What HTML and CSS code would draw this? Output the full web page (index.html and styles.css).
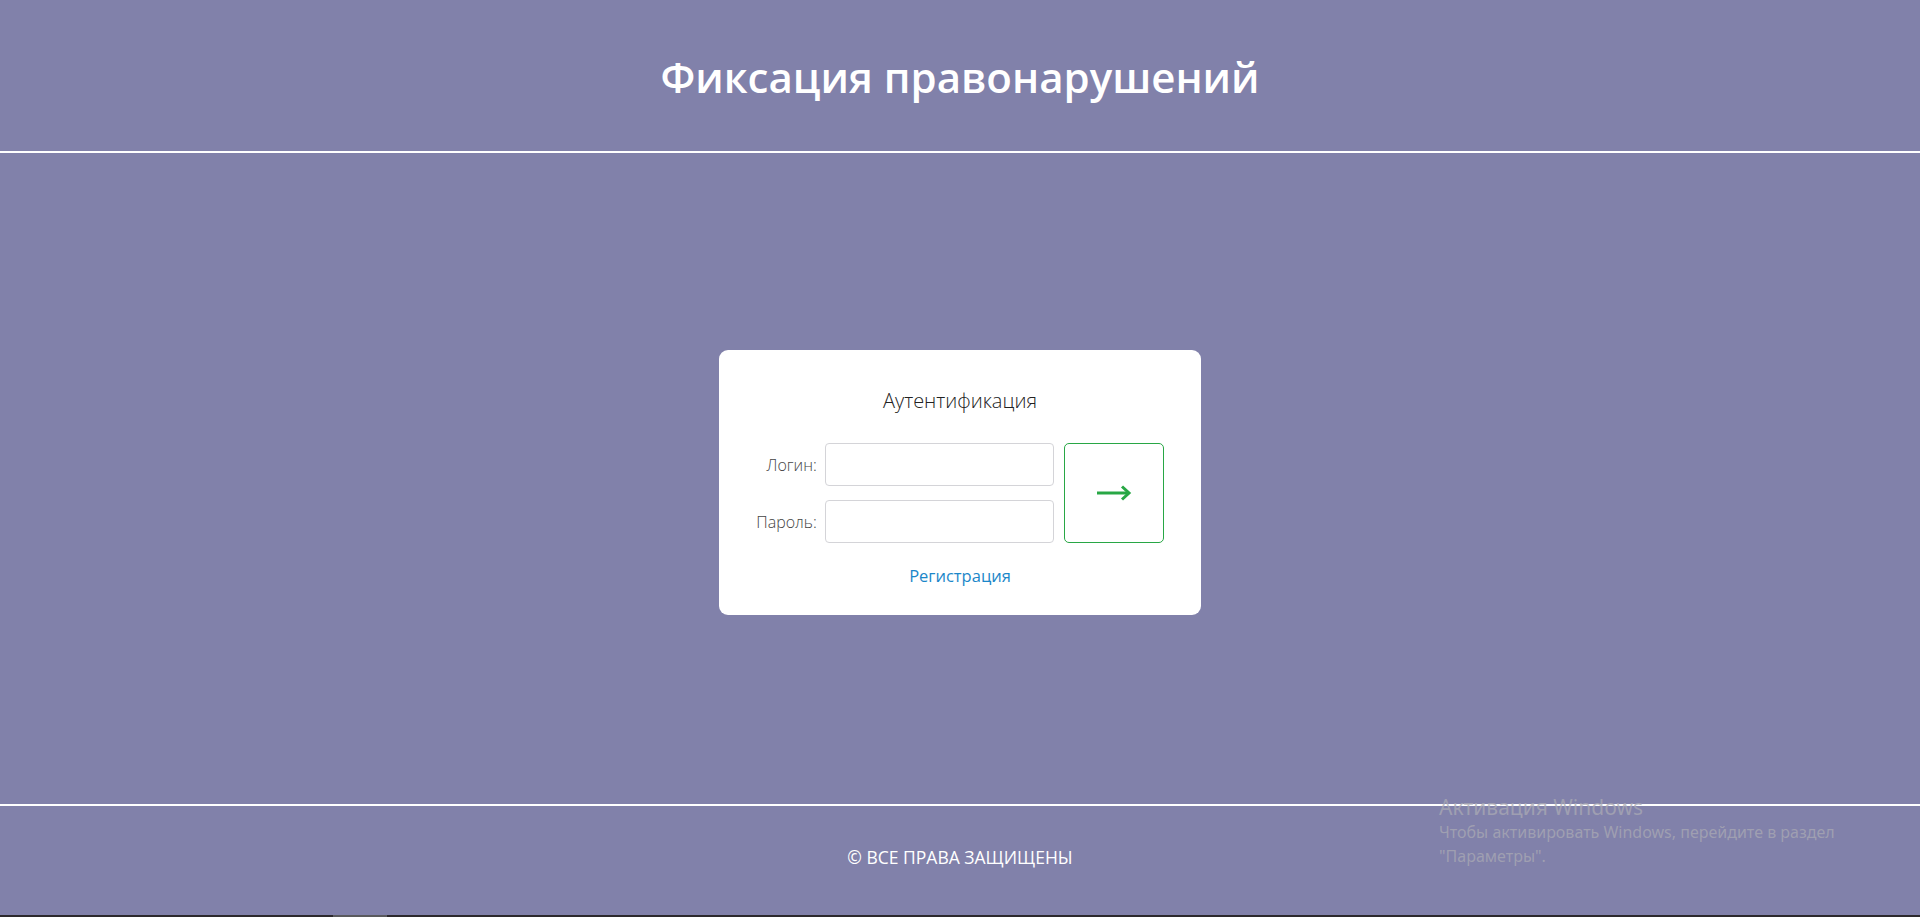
FILE: index.html
```html
<!DOCTYPE html>
<html lang="ru">
<head>
<meta charset="utf-8">
<title>Фиксация правонарушений</title>
<link rel="stylesheet" href="styles.css">
</head>
<body>
<div class="page">
  <header class="header">
    <h1 class="title">Фиксация правонарушений</h1>
  </header>
  <main class="main">
    <form class="card" onsubmit="return false;">
      <div class="card-title">Аутентификация</div>
      <div class="form-row">
        <div class="fields">
          <label class="label" for="login">Логин:</label>
          <input class="input" id="login" type="text">
          <label class="label" for="password">Пароль:</label>
          <input class="input" id="password" type="password">
        </div>
        <button class="submit" type="submit" aria-label="Войти">
          <svg width="36" height="18" viewBox="0 0 36 18" fill="none" stroke="#28a745" stroke-width="3">
            <line x1="1" y1="9" x2="33" y2="9"/>
            <polyline points="26,2.5 33,9 26,15.5" stroke-linejoin="miter"/>
          </svg>
        </button>
      </div>
      <a class="register" href="#">Регистрация</a>
    </form>
  </main>
  <footer class="footer">
    <span class="copy">© ВСЕ ПРАВА ЗАЩИЩЕНЫ</span>
  </footer>
  <div class="taskbar"><span class="taskbar-item"></span></div>
  <div class="watermark">
    <div class="wm-title">Активация Windows</div>
    <div class="wm-text">Чтобы активировать Windows, перейдите в раздел<br>"Параметры".</div>
  </div>
</div>
</body>
</html>
```
FILE: styles.css
```css
* { box-sizing: border-box; }
html, body { margin: 0; padding: 0; }
body {
  background: #8181aa;
  font-family: "Open Sans", "Noto Sans", sans-serif;
  color: #333;
}
.page {
  position: relative;
  height: 917px;
  display: flex;
  flex-direction: column;
  overflow: hidden;
}
.header {
  height: 153px;
  border-bottom: 2px solid #ffffff;
  display: flex;
  align-items: center;
  justify-content: center;
  padding-top: 1px;
}
.title {
  margin: 0;
  color: #ffffff;
  font-size: 42px;
  font-weight: 600;
  letter-spacing: 0;
}
.main {
  flex: 1;
  display: flex;
  align-items: center;
  justify-content: center;
  padding-top: 8px;
}
.card {
  width: 482px;
  height: 265px;
  background: #ffffff;
  border-radius: 9px;
  display: flex;
  flex-direction: column;
  align-items: center;
  padding-top: 39px;
}
.card-title {
  font-size: 20px;
  font-weight: 300;
  line-height: 24px;
  color: #222;
}
.form-row {
  margin-top: 30px;
  display: flex;
  align-items: stretch;
  gap: 10px;
}
.fields {
  display: grid;
  grid-template-columns: auto 229px;
  column-gap: 8px;
  row-gap: 14px;
  align-items: center;
}
.label {
  text-align: right;
  font-size: 16px;
  font-weight: 300;
  color: #444;
}
.input {
  height: 43px;
  width: 229px;
  border: 1px solid #d4d4d8;
  border-radius: 4px;
  background: #fff;
  font-family: inherit;
  font-size: 15px;
  padding: 0 10px;
  outline: none;
}
.submit {
  width: 100px;
  height: 100px;
  border: 1px solid #28a745;
  border-radius: 5px;
  background: #ffffff;
  display: flex;
  align-items: center;
  justify-content: center;
  padding: 0;
  cursor: pointer;
}
.register {
  margin-top: 22px;
  font-size: 16.5px;
  line-height: 22px;
  color: #1b87c9;
  text-decoration: none;
}
.footer {
  height: 111px;
  border-top: 2px solid #ffffff;
  display: flex;
  align-items: center;
  justify-content: center;
  padding-bottom: 8px;
}
.copy {
  color: #ffffff;
  font-size: 17.5px;
  letter-spacing: 0;
}
.taskbar {
  height: 2px;
  background: #2c292d;
  padding-left: 333px;
}
.taskbar-item {
  display: block;
  width: 54px;
  height: 2px;
  background: #5a5a5e;
}
.watermark {
  position: absolute;
  left: 1439px;
  top: 794px;
  color: rgba(170, 170, 180, 0.75);
  font-family: "Noto Sans", "Open Sans", sans-serif;
}
.wm-title {
  font-size: 21px;
  line-height: 26px;
}
.wm-text {
  font-size: 16px;
  line-height: 24px;
}
```
